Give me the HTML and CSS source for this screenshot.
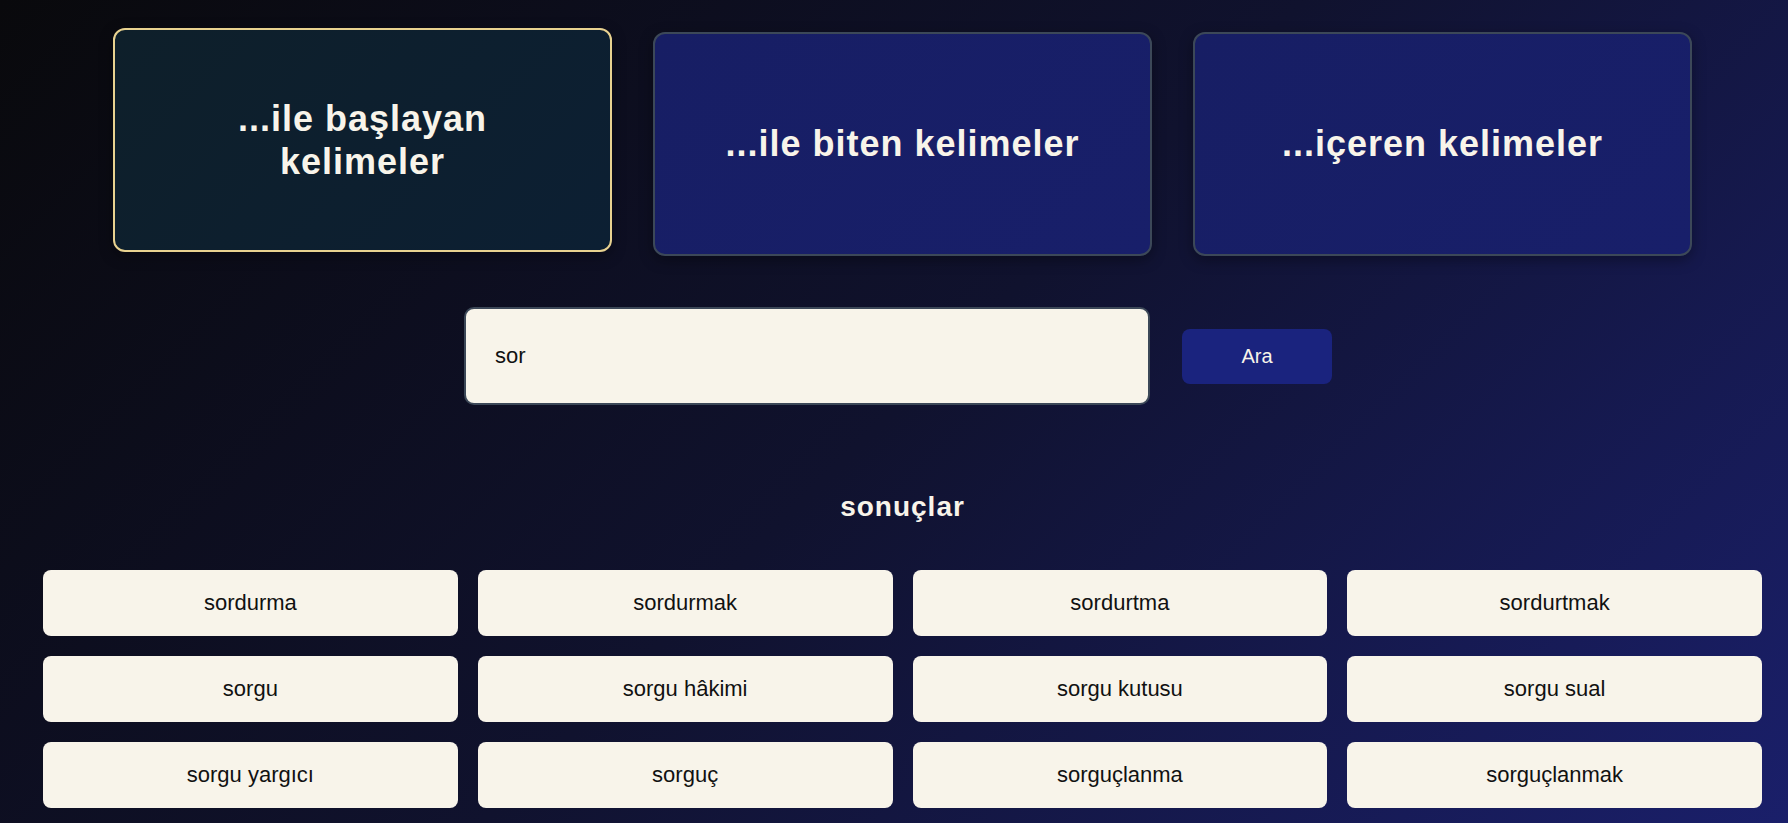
FILE: index.html
```html
<!DOCTYPE html>
<html lang="tr">
<head>
<meta charset="utf-8">
<title>Kelime Arama</title>
<link rel="stylesheet" href="styles.css">
</head>
<body>
<main class="page">
  <section class="modes">
    <button class="mode mode-active">...ile başlayan kelimeler</button>
    <button class="mode">...ile biten kelimeler</button>
    <button class="mode">...içeren kelimeler</button>
  </section>

  <form class="search">
    <input class="search-input" type="text" value="sor">
    <button class="search-btn" type="button">Ara</button>
  </form>

  <h2 class="results-title">sonuçlar</h2>

  <section class="results">
    <div class="word">sordurma</div>
    <div class="word">sordurmak</div>
    <div class="word">sordurtma</div>
    <div class="word">sordurtmak</div>
    <div class="word">sorgu</div>
    <div class="word">sorgu hâkimi</div>
    <div class="word">sorgu kutusu</div>
    <div class="word">sorgu sual</div>
    <div class="word">sorgu yargıcı</div>
    <div class="word">sorguç</div>
    <div class="word">sorguçlanma</div>
    <div class="word">sorguçlanmak</div>
  </section>
</main>
</body>
</html>
```

FILE: styles.css
```css
html {
  height: 100%;
  background: linear-gradient(135deg, #09090c 0%, #10122e 50%, #1a1f6a 100%);
  background-attachment: fixed;
}

body {
  margin: 0;
  min-height: 100%;
  font-family: "Liberation Sans", Arial, sans-serif;
  color: #f8f4ea;
}

.page {
  padding: 32px 26px 20px 43px;
}

.modes {
  display: grid;
  grid-template-columns: repeat(3, 1fr);
  gap: 41px;
  margin: 0 70px;
}

.mode {
  height: 224px;
  padding: 0 40px;
  border: 2px solid #3c4858;
  border-radius: 12px;
  background: linear-gradient(135deg, #171e64 0%, #181f6a 100%);
  color: #f8f4ea;
  font-family: "Liberation Sans", Arial, sans-serif;
  font-size: 36px;
  font-weight: 700;
  line-height: 1.2;
  letter-spacing: 1px;
  text-align: center;
  box-shadow: 0 4px 14px rgba(0, 0, 0, 0.35);
  cursor: pointer;
}

.mode-active {
  border-color: #e8d290;
  background: linear-gradient(135deg, #0e1f2a 0%, #0c1f33 100%);
  transform: translateY(-4px);
}

.search {
  display: flex;
  justify-content: center;
  align-items: center;
  gap: 32px;
  margin: 51px 0 0;
  padding-right: 9px;
}

.search-input {
  box-sizing: border-box;
  width: 686px;
  height: 98px;
  padding: 0 29px;
  border: 2px solid #3c4858;
  border-radius: 10px;
  background: #f8f4ea;
  color: #111111;
  font-family: "Liberation Sans", Arial, sans-serif;
  font-size: 22px;
  outline: none;
}

.search-btn {
  width: 150px;
  height: 55px;
  border: none;
  border-radius: 8px;
  background: #1a237e;
  color: #f8f4ea;
  font-family: "Liberation Sans", Arial, sans-serif;
  font-size: 20px;
  cursor: pointer;
}

.results-title {
  margin: 86px 0 47px;
  font-size: 28px;
  font-weight: 700;
  line-height: 32px;
  letter-spacing: 1px;
  text-align: center;
  color: #f8f4ea;
}

.results {
  display: grid;
  grid-template-columns: repeat(4, 1fr);
  gap: 20px;
}

.word {
  display: flex;
  align-items: center;
  justify-content: center;
  height: 66px;
  border-radius: 8px;
  background: #f8f4ea;
  color: #111111;
  font-size: 22px;
}
```
